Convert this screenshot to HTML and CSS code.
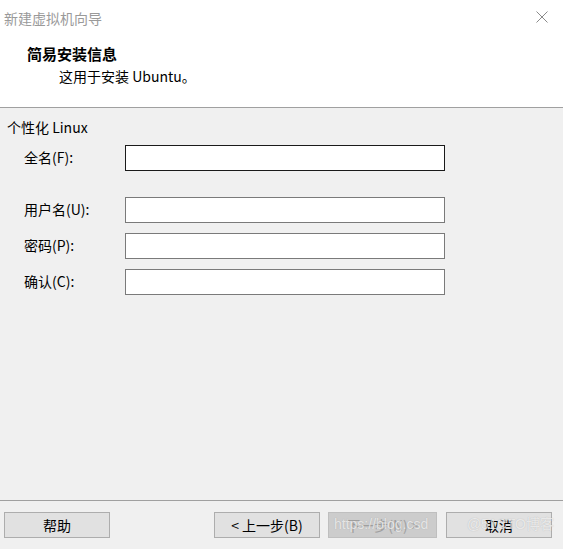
FILE: index.html
```html
<!DOCTYPE html>
<html lang="zh">
<head>
<meta charset="utf-8">
<link rel="stylesheet" href="styles.css">
</head>
<body>
<div class="window">
  <div class="titlebar">
    <span class="title">新建虚拟机向导</span>
    <svg class="close" width="12" height="12" viewBox="0 0 12 12"><path d="M0.5 0.5 L11.5 11.5 M11.5 0.5 L0.5 11.5" stroke="#8a8a8a" stroke-width="1" fill="none"/></svg>
  </div>
  <div class="header">
    <div class="head-title">简易安装信息</div>
    <div class="head-sub">这用于安装 Ubuntu。</div>
  </div>
  <div class="content">
    <div class="group">个性化 Linux</div>
    <div class="row r1"><label class="lbl">全名(F):</label><div class="field focus"></div></div>
    <div class="row r2"><label class="lbl">用户名(U):</label><div class="field"></div></div>
    <div class="row r3"><label class="lbl">密码(P):</label><div class="field"></div></div>
    <div class="row r3"><label class="lbl">确认(C):</label><div class="field"></div></div>
  </div>
  <div class="footer">
    <button class="btn help">帮助</button>
    <div class="right">
      <button class="btn prev">&lt;&nbsp;上一步(B)</button>
      <button class="btn next" disabled>下一步(N)&nbsp;&gt;</button>
      <button class="btn cancel">取消</button>
    </div>
    <div class="watermark"><span class="wm1">https://blog.csd</span><span class="wm2">@51CTO博客</span></div>
  </div>
</div>
</body>
</html>
```

FILE: styles.css
```css
html, body {
  margin: 0;
  padding: 0;
}
body {
  width: 563px;
  height: 549px;
  overflow: hidden;
  background: #f0f0f0;
  font-family: "Noto Sans CJK SC", "Microsoft YaHei", sans-serif;
  font-size: 14px;
  color: #000;
}
.window {
  display: flex;
  flex-direction: column;
  height: 549px;
}
.titlebar {
  height: 36px;
  background: #fff;
  display: flex;
  align-items: center;
  justify-content: space-between;
  padding: 0 15px 0 4px;
}
.title {
  color: #9a9a9a;
  font-size: 14px;
  line-height: 20px;
}
.close {
  display: block;
  margin-top: -2px;
}
.header {
  background: #fff;
  height: 72px;
  box-sizing: border-box;
  padding-top: 8px;
  border-bottom: 1px solid #a0a0a0;
}
.head-title {
  padding-left: 27px;
  font-weight: bold;
  font-size: 15px;
  line-height: 20px;
}
.head-sub {
  padding-left: 59px;
  margin-top: 2px;
  font-size: 14px;
  line-height: 20px;
}
.content {
  padding-top: 9px;
}
.group {
  padding-left: 7px;
  line-height: 20px;
}
.row {
  display: flex;
  align-items: center;
  height: 26px;
  margin-top: 8px;
}
.r2 { margin-top: 26px; }
.r3 { margin-top: 10px; }
.lbl {
  width: 101px;
  padding-left: 24px;
  line-height: 20px;
  margin-top: -3px;
}
.field {
  width: 320px;
  height: 26px;
  box-sizing: border-box;
  background: #fff;
  border: 1px solid #7a7a7a;
}
.field.focus {
  border-color: #1a1a1a;
}
.footer {
  margin-top: auto;
  position: relative;
  height: 49px;
  box-sizing: border-box;
  border-top: 1px solid #a0a0a0;
  padding: 11px 11px 0 4px;
  display: flex;
  justify-content: space-between;
  align-items: flex-start;
}
.right {
  display: flex;
}
.btn {
  height: 26px;
  width: 106px;
  box-sizing: border-box;
  background: #e1e1e1;
  border: 1px solid #adadad;
  font-family: inherit;
  font-size: 14px;
  color: #000;
  padding: 0;
  line-height: 22px;
}
.next {
  width: 109px;
  margin-left: 8px;
  background: #cccccc;
  border-color: #bfbfbf;
  color: #a0a0a0;
}
.cancel {
  margin-left: 9px;
}
.watermark {
  position: absolute;
  left: 334px;
  top: 14px;
  width: 220px;
  display: flex;
  justify-content: space-between;
  font-family: "Liberation Sans", "Noto Sans CJK SC", sans-serif;
  font-size: 14px;
  line-height: 18px;
  color: rgba(255, 255, 255, 0.7);
  text-shadow: 0 0 1px rgba(120, 120, 120, 0.45);
  white-space: nowrap;
  pointer-events: none;
}
```
